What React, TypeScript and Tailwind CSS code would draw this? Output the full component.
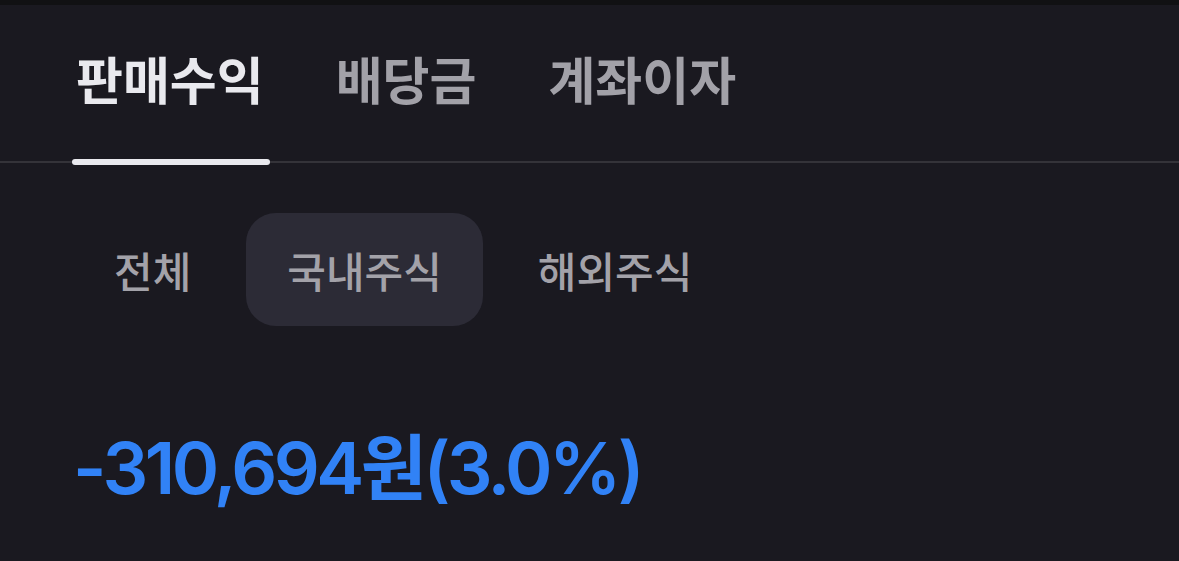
import { useState } from 'react';
import clsx from 'clsx';

const TABS = ['판매수익', '배당금', '계좌이자'];
const MARKETS = ['전체', '국내주식', '해외주식'];

const KR = { fontFamily: '"Noto Sans CJK KR", "Noto Sans", sans-serif' };

export default function App() {
  const [tab, setTab] = useState(0);
  const [market, setMarket] = useState(1);

  return (
    <div className="w-[1179px] h-[561px] bg-[#1a1920] overflow-hidden flex flex-col" style={KR}>
      <div className="h-[5px] bg-[#111113]" />

      {/* Top tabs */}
      <div className="relative h-[156px] flex items-stretch pl-[76px] gap-[72px]">
        {TABS.map((t, i) => (
          <button
            key={t}
            onClick={() => setTab(i)}
            className={clsx(
              'relative pt-[48px] text-[51px] font-bold leading-none h-full flex items-start',
              i === tab ? 'text-[#e9e9ee]' : 'text-[#a2a1a8]'
            )}
          >
            {t}
            {i === tab && (
              <span className="absolute left-[-4px] right-[-6px] bottom-[-4px] h-[6px] rounded-full bg-[#e9e9ee] z-10" />
            )}
          </button>
        ))}
      </div>
      <div className="h-[2px] bg-[#343339]" />

      {/* Market filter */}
      <div className="flex items-center pl-[73px] mt-[50px] gap-[14px]">
        {MARKETS.map((m, i) => (
          <button
            key={m}
            onClick={() => setMarket(i)}
            className={clsx(
              'h-[113px] px-[41px] rounded-[30px] text-[42px] font-medium text-[#a3a2a9] leading-none',
              i === market ? 'bg-[#2c2b36]' : 'bg-transparent'
            )}
          >
            {m}
          </button>
        ))}
      </div>

      {/* Amount */}
      <div
        className="pl-[73px] mt-[106px] text-[72px] font-semibold leading-none text-[#3182f6] tracking-[-3.5px]"
        style={{ fontFamily: 'Inter, "Noto Sans CJK KR", sans-serif' }}
      >
        -310,694원(3.0%)
      </div>
    </div>
  );
}
